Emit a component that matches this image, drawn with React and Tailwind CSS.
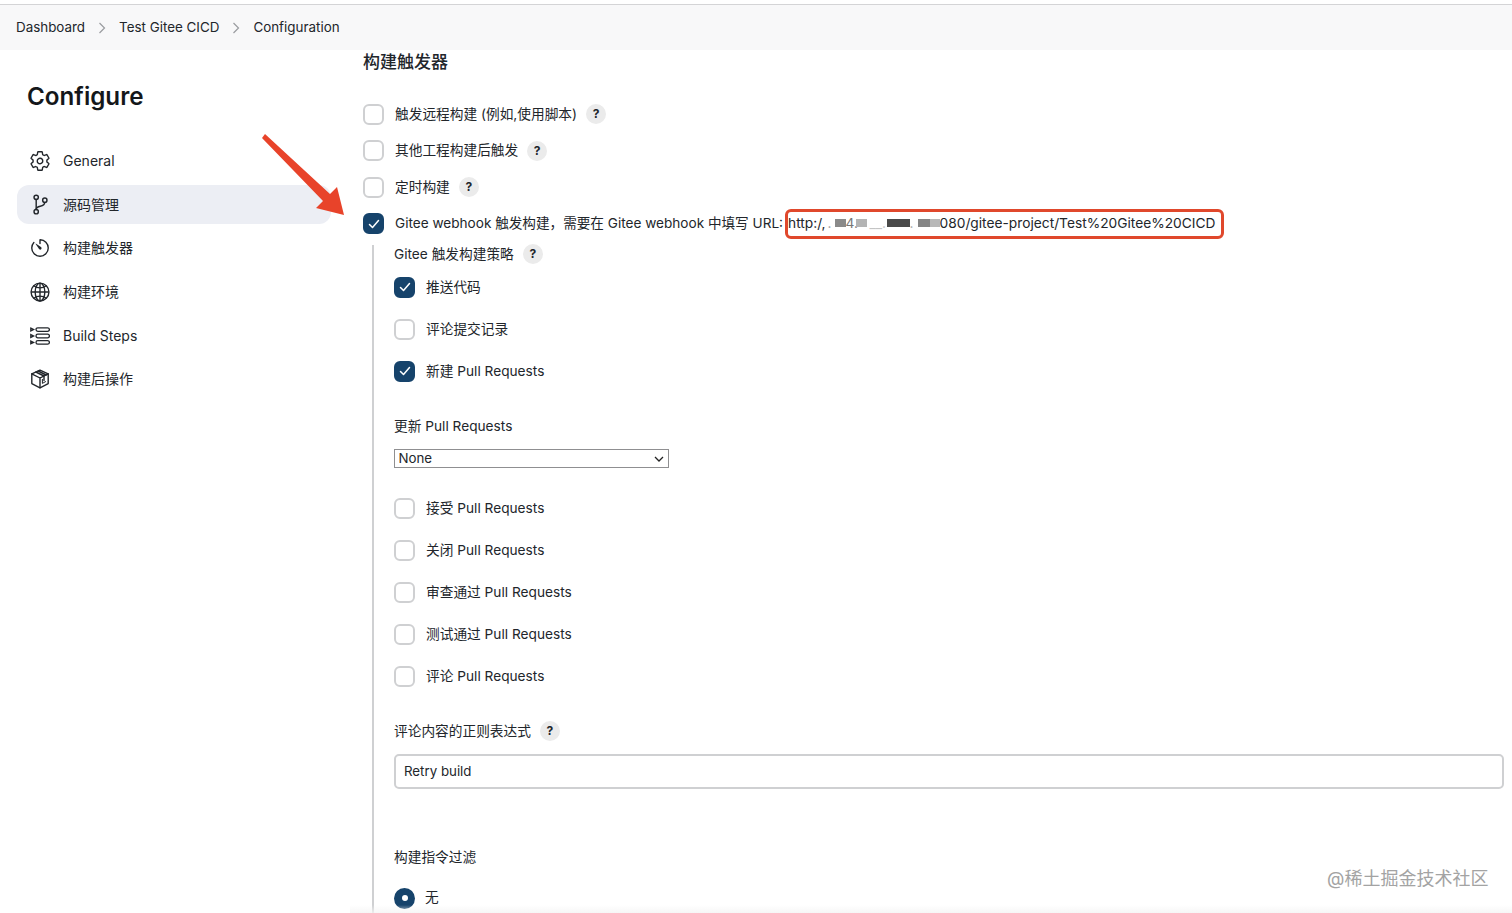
import { IoSettingsOutline, IoGitBranchOutline, IoTimerOutline, IoGlobeOutline } from 'react-icons/io5';

const font = "font-['Inter','Noto_Sans_CJK_SC',sans-serif]";

const StepsIcon = () => (
  <svg width="20" height="18" viewBox="0 0 20 18" fill="none" stroke="currentColor" strokeWidth="1.3">
    <rect x="6" y="0.8" width="13.4" height="3.6" rx="1.8" />
    <rect x="6" y="7.2" width="13.4" height="3.6" rx="1.8" />
    <rect x="6" y="13.6" width="13.4" height="3.6" rx="1.8" />
    <path d="M0.8 1.2 3.6 2.6 0.8 4z M0.8 7.6 3.6 9 0.8 10.4z M0.8 14 3.6 15.4 0.8 16.8z" />
  </svg>
);

const BoxIcon = () => (
  <svg width="20" height="20" viewBox="0 0 20 20" fill="none" stroke="currentColor" strokeWidth="1.4" strokeLinejoin="round" strokeLinecap="round">
    <path d="M10 1.2 18.2 4.8V14.6L10 18.8 1.8 14.6V4.8z" />
    <path d="M1.8 4.8 10 9 18.2 4.8M10 9V18.8" />
    <path d="M5.8 3 14 7V11.5M8.2 2 16.2 6" />
    <path d="M12.4 10.4V14.4L15.6 12.6" strokeWidth="1" />
  </svg>
);

const navItems = [
  { label: 'General', icon: <IoSettingsOutline size={22} /> },
  { label: '源码管理', icon: <IoGitBranchOutline size={23} />, active: true },
  { label: '构建触发器', icon: <IoTimerOutline size={22} /> },
  { label: '构建环境', icon: <IoGlobeOutline size={22} /> },
  { label: 'Build Steps', icon: <StepsIcon /> },
  { label: '构建后操作', icon: <BoxIcon /> },
];

const Help = () => (
  <span className="flex h-5 w-5 shrink-0 items-center justify-center rounded-full bg-[#ebebeb] text-xs font-bold text-[#20252b]">?</span>
);

const Box = ({ checked }) => (
  <span className={`flex h-[21px] w-[21px] shrink-0 items-center justify-center rounded-md border-2 ${checked ? 'border-[#16436b] bg-[#16436b]' : 'border-[#cfd0d2] bg-white'}`}>
    {checked && (
      <svg width="12" height="10" viewBox="0 0 12 10" fill="none" stroke="white" strokeWidth="1.5" strokeLinecap="round" strokeLinejoin="round">
        <path d="M1.5 5.5 4.5 8.5 10.5 1.5" />
      </svg>
    )}
  </span>
);

const Check = ({ label, checked, help, className }) => (
  <div className={`flex items-center ${className}`}>
    <Box checked={checked} />
    <span className="ml-[11px] pt-px">{label}</span>
    {help && <span className="ml-[9px]"><Help /></span>}
  </div>
);

const Blur = ({ w, c }) => (
  <span className={`inline-block h-[8px] shrink-0 blur-[0.7px] ${c} ${w}`} />
);

export default function App() {
  return (
    <div className={`${font} relative h-[913px] w-[1512px] overflow-hidden bg-white text-sm text-[#22262b]`}>
      <div className="h-[5px] border-b border-[#d4d4d6] bg-white" />
      <div className="flex h-[45px] items-center gap-[13px] bg-[#f8f8f9] pl-4 pt-px text-[13.4px]">
        <span>Dashboard</span>
        <Chevron />
        <span>Test Gitee CICD</span>
        <Chevron />
        <span>Configuration</span>
      </div>

      <div className="flex">
        <aside className="w-[363px] shrink-0 pl-[17px]">
          <h1 className="ml-[10px] mt-[30px] h-[34px] text-[24.2px] leading-[34px] font-semibold text-[#14171a]">Configure</h1>
          <nav className="mt-[27.5px] flex w-[314px] flex-col gap-[4.7px]">
            {navItems.map((item) => (
              <div key={item.label} className={`flex h-[39px] items-center rounded-[12px] ${item.active ? 'bg-[#eceef4]' : ''}`}>
                <span className="flex w-[46px] justify-center">{item.icon}</span>
                <span>{item.label}</span>
              </div>
            ))}
          </nav>
        </aside>

        <main className="min-w-0 flex-1 text-[13.7px]">
          <h2 className="h-6 text-[17px] leading-6 font-medium">构建触发器</h2>
          <div className="mt-[21.75px]">
            <Check className="h-[36.5px]" label="触发远程构建 (例如,使用脚本)" help />
            <Check className="h-[36.5px]" label="其他工程构建后触发" help />
            <Check className="h-[36.5px]" label="定时构建" help />
            <div className="flex h-[36.5px] items-center">
              <Box checked />
              <span className="ml-[11px] w-[390px] shrink-0 text-[13.6px] whitespace-nowrap">Gitee webhook 触发构建，需要在 Gitee webhook 中填写 URL:</span>
              <span className="flex h-[30px] w-[439px] shrink-0 items-center rounded-[6px] border-[3px] border-[#e0482c] text-[13.75px] whitespace-nowrap">
                <span>http:/,</span>
                <span className="flex w-[114px] items-center overflow-hidden">
                  <span className="w-[9px] pl-[2px] text-[#9a9a9a]">.</span>
                  <Blur w="w-[11px]" c="bg-[#8a8a8a]" />
                  <span className="w-[10px] text-[#777777]">4.</span>
                  <Blur w="w-[11px]" c="bg-[#b4b4b4]" />
                  <span className="w-[20px] pl-[3px] text-[#c4c4c4]">__.</span>
                  <Blur w="w-[23px]" c="bg-[#4a4a4a]" />
                  <span className="w-[8px] text-[#a8a8a8]">.</span>
                  <Blur w="w-[12px]" c="bg-[#858585]" />
                  <Blur w="w-[10px]" c="bg-[#b8b8b8]" />
                </span>
                <span>080/gitee-project/Test%20Gitee%20CICD</span>
              </span>
            </div>
          </div>

          <div className="ml-[9px] mt-[3.5px] border-l-2 border-[#cfd0d2] pl-5">
            <div className="flex h-[18px] items-center gap-[9px]">
              <span className="pt-px">Gitee 触发构建策略</span>
              <Help />
            </div>
            <div className="mt-[3px]">
              <Check className="h-[42px]" label="推送代码" checked />
              <Check className="h-[42px]" label="评论提交记录" />
              <Check className="h-[42px]" label="新建 Pull Requests" checked />
            </div>
            <div className="mt-[22px] flex h-6 items-center pt-px">更新 Pull Requests</div>
            <div className="mt-[11px] flex h-[19px] w-[275px] items-center justify-between border border-[#8f8f91] bg-white pr-1 pl-[3.5px] text-[13.3px]">
              <span>None</span>
              <svg width="10" height="6" viewBox="0 0 10 6" fill="none" stroke="#222" strokeWidth="1.3">
                <path d="M1 1 5 5 9 1" />
              </svg>
            </div>
            <div className="mt-[19.4px]">
              <Check className="h-[41.9px]" label="接受 Pull Requests" />
              <Check className="h-[41.9px]" label="关闭 Pull Requests" />
              <Check className="h-[41.9px]" label="审查通过 Pull Requests" />
              <Check className="h-[41.9px]" label="测试通过 Pull Requests" />
              <Check className="h-[41.9px]" label="评论 Pull Requests" />
            </div>
            <div className="mt-[22px] flex h-6 items-center gap-[9px]">
              <span className="pt-px">评论内容的正则表达式</span>
              <Help />
            </div>
            <div className="mt-[11px] flex h-[35px] w-[1110px] items-center rounded-[5px] border-2 border-[#cfd0d2] pl-2 text-[13.3px]">Retry build</div>
            <div className="mt-14 flex h-6 items-center pt-px">构建指令过滤</div>
            <div className="mt-2 flex h-[42px] items-center">
              <span className="flex h-[21px] w-[21px] items-center justify-center rounded-full bg-[#16436b]">
                <span className="h-[6px] w-[6px] rounded-full bg-white" />
              </span>
              <span className="ml-[10px]">无</span>
            </div>
          </div>
        </main>
      </div>

      <svg className="absolute left-[255px] top-[128px]" width="95" height="95" viewBox="255 128 95 95">
        <path d="M265 134 330 194 337 187 344 215 316 208 323 201 262 138z" fill="#e8432a" />
      </svg>
      <div className="absolute bottom-0 left-[350px] right-0 h-2 bg-gradient-to-b from-white/0 to-[#f4f4f4]/80" />
      <span className="absolute left-[1327px] top-[868px] text-[18px] leading-[22px] text-[#a3a3a3]">@稀土掘金技术社区</span>
    </div>
  );
}

function Chevron() {
  return (
    <svg width="8" height="12" viewBox="0 0 8 12" fill="none" stroke="#9a9ca0" strokeWidth="1.2">
      <path d="M1.5 1 6.5 6 1.5 11" />
    </svg>
  );
}
